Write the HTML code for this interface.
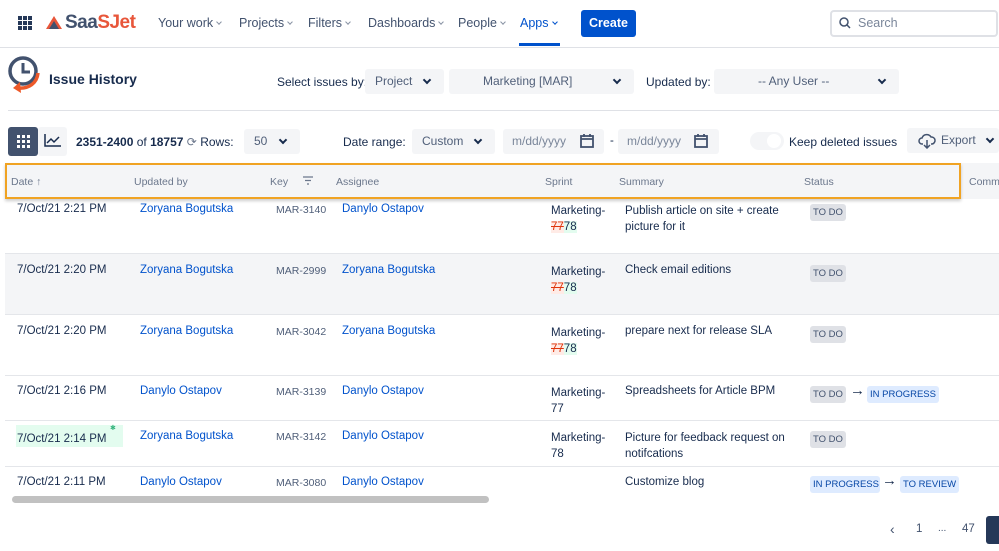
<!DOCTYPE html>
<html><head><meta charset="utf-8"><style>
*{box-sizing:border-box;margin:0;padding:0}
body{width:999px;height:551px;overflow:hidden;background:#fff;font-family:"Liberation Sans",sans-serif;font-size:11.5px;color:#172b4d;position:relative}
.a{position:absolute;white-space:nowrap}
.nav{font-size:12.5px;color:#42526e;top:16px}
.cv{display:inline-block;width:5px;height:5px;border-right:1.3px solid currentColor;border-bottom:1.3px solid currentColor;transform:rotate(45deg);vertical-align:3px;margin-left:4px}
.nav .cv{width:4px;height:4px;border-color:#8993a4}
.sel{background:#f4f5f7;border-radius:3px;height:25px;color:#505f79;font-size:12px;line-height:25px}
.sel .cv{position:absolute;right:14px;top:8px;border-color:#172b4d;width:6px;height:6px;border-width:0 2px 2px 0}
.lnk{color:#0052cc}
.key{color:#505f79;font-size:10.5px}
.th{color:#6b778c;font-size:10.5px;top:176px}
.lz{background:#dfe1e6;color:#42526e;font-size:9.5px;padding:3px 3px;border-radius:3px}
.lb{background:#deebff;color:#0747a6;font-size:9.5px;padding:3px 3px;border-radius:3px}
.del{background:#ffebe6;text-decoration:line-through;color:#de350b}
.ins{background:#e3fcef}
</style></head><body>
<div class="a" style="left:18px;top:16px;width:14px;height:14px;display:grid;grid-template-columns:repeat(3,4px);gap:1px">
<i style="background:#253858"></i><i style="background:#253858"></i><i style="background:#253858"></i><i style="background:#253858"></i><i style="background:#253858"></i><i style="background:#253858"></i><i style="background:#253858"></i><i style="background:#253858"></i><i style="background:#253858"></i></div>
<svg class="a" style="left:45px;top:15px" width="18" height="15"><path d="M9 1L1 14h16z" fill="#e8563a"/><path d="M9 6L4 14h10z" fill="#42526e"/></svg>
<div class="a" style="left:65px;top:12px;font-size:19px;font-weight:bold;letter-spacing:-0.5px;color:#42526e">Saa<span style="color:#e8563a">SJet</span></div>
<div class="a nav" style="left:158px">Your work<span class="cv"></span></div>
<div class="a nav" style="left:239px">Projects<span class="cv"></span></div>
<div class="a nav" style="left:308px">Filters<span class="cv"></span></div>
<div class="a nav" style="left:368px">Dashboards<span class="cv"></span></div>
<div class="a nav" style="left:458px">People<span class="cv"></span></div>
<div class="a nav" style="left:520px;color:#0052cc">Apps<span class="cv" style="border-color:#0052cc"></span></div>
<div class="a" style="left:519px;top:43px;width:41px;height:3px;background:#0052cc"></div>
<div class="a" style="left:581px;top:10px;width:55px;height:27px;background:#0052cc;border-radius:3px;color:#fff;font-weight:bold;font-size:12.5px;text-align:center;line-height:27px">Create</div>
<div class="a" style="left:830px;top:10px;width:168px;height:27px;border:2px solid #dfe1e6;border-radius:4px;color:#7a869a;font-size:12.5px;line-height:23px;padding-left:26px">Search</div>
<svg class="a" style="left:839px;top:17px" width="12" height="12"><circle cx="5" cy="5" r="4" fill="none" stroke="#42526e" stroke-width="1.5"/><path d="M8 8l3 3" stroke="#42526e" stroke-width="1.5"/></svg>
<div class="a" style="left:0;top:47px;width:999px;height:1px;background:#dfe1e6"></div>
<svg class="a" style="left:6px;top:54px" width="36" height="44"><circle cx="17" cy="17" r="13" fill="none" stroke="#42526e" stroke-width="3.5"/><path d="M17 9v9h7" fill="none" stroke="#42526e" stroke-width="3"/><path d="M32 19c-1 10-9 16-20 15" fill="none" stroke="#ed5a2a" stroke-width="3.5"/><path d="M14 28l-7 6 8 5z" fill="#ed5a2a"/></svg>
<div class="a" style="left:49px;top:71px;font-size:14px;font-weight:bold;color:#172b4d">Issue History</div>
<div class="a" style="left:277px;top:75px;font-size:12px">Select issues by:</div>
<div class="a sel" style="left:365px;top:69px;width:79px;padding-left:10px">Project<span class="cv"></span></div>
<div class="a sel" style="left:449px;top:69px;width:185px;padding-left:34px">Marketing [MAR]<span class="cv"></span></div>
<div class="a" style="left:646px;top:75px;font-size:12px">Updated by:</div>
<div class="a sel" style="left:714px;top:69px;width:185px;padding-left:44px">-- Any User --<span class="cv"></span></div>
<div class="a" style="left:8px;top:110px;width:991px;height:1px;background:#dfe1e6"></div>
<div class="a" style="left:8px;top:127px;width:30px;height:29px;background:#42526e;border-radius:3px"></div>
<div class="a" style="left:17px;top:135px;width:13px;height:13px;display:grid;grid-template-columns:repeat(3,3px);gap:2px"><i style="background:#fff"></i><i style="background:#fff"></i><i style="background:#fff"></i><i style="background:#fff"></i><i style="background:#fff"></i><i style="background:#fff"></i><i style="background:#fff"></i><i style="background:#fff"></i><i style="background:#fff"></i></div>
<div class="a" style="left:38px;top:127px;width:29px;height:29px;background:#f4f5f7;border-radius:3px"></div>
<svg class="a" style="left:44px;top:133px" width="18" height="14"><path d="M1 1v12h16" fill="none" stroke="#172b4d" stroke-width="1.5"/><path d="M3 10l4-4 3 3 5-5" fill="none" stroke="#172b4d" stroke-width="1.5"/></svg>
<div class="a" style="left:76px;top:135px;font-size:12px"><b>2351-2400</b> of <b>18757</b> <span style="color:#6b778c">⟳</span> Rows:</div>
<div class="a sel" style="left:244px;top:129px;width:56px;padding-left:10px">50<span class="cv"></span></div>
<div class="a" style="left:343px;top:135px;font-size:12px">Date range:</div>
<div class="a sel" style="left:412px;top:129px;width:83px;padding-left:10px">Custom<span class="cv"></span></div>
<div class="a sel" style="left:503px;top:129px;width:101px;padding-left:9px;color:#7a869a">m/dd/yyyy</div>
<div class="a" style="left:610px;top:135px">-</div>
<div class="a sel" style="left:618px;top:129px;width:101px;padding-left:9px;color:#7a869a">m/dd/yyyy</div>
<svg class="a" style="left:580px;top:134px" width="14" height="14"><rect x="1" y="2" width="12" height="11" fill="none" stroke="#42526e" stroke-width="1.8"/><path d="M1 5h12M4 0v3M10 0v3" stroke="#42526e" stroke-width="1.8"/></svg>
<svg class="a" style="left:694px;top:134px" width="14" height="14"><rect x="1" y="2" width="12" height="11" fill="none" stroke="#42526e" stroke-width="1.8"/><path d="M1 5h12M4 0v3M10 0v3" stroke="#42526e" stroke-width="1.8"/></svg>
<div class="a" style="left:750px;top:132px;width:34px;height:18px;border-radius:9px;background:#f4f5f7"></div>
<div class="a" style="left:767px;top:134px;width:14px;height:14px;border-radius:7px;background:#fff"></div>
<div class="a" style="left:789px;top:135px;font-size:12px">Keep deleted issues</div>
<div class="a sel" style="left:907px;top:128px;width:92px;padding-left:34px">Export<span class="cv" style="right:6px"></span></div>
<svg class="a" style="left:918px;top:133px" width="18" height="16"><path d="M5 11H4a3 3 0 010-6 5 5 0 019-1 3.5 3.5 0 011 7h-1" fill="none" stroke="#42526e" stroke-width="1.5"/><path d="M9 7v8M6 12l3 3 3-3" fill="none" stroke="#42526e" stroke-width="1.5"/></svg>
<div class="a" style="left:5px;top:163px;width:994px;height:36px;background:#f4f5f7"></div>
<div class="a" style="left:5px;top:163px;width:956px;height:36px;border:2px solid #f0a323;box-shadow:0 2px 3px rgba(0,0,0,.2)"></div>
<div class="a th" style="left:11px">Date ↑</div>
<div class="a th" style="left:134px">Updated by</div>
<div class="a th" style="left:270px">Key</div>
<svg class="a" style="left:303px;top:176px" width="10" height="9"><path d="M0 1h10M2 4.5h6M4 8h2" stroke="#6b778c" stroke-width="1.3"/></svg>
<div class="a th" style="left:336px">Assignee</div>
<div class="a th" style="left:545px">Sprint</div>
<div class="a th" style="left:619px">Summary</div>
<div class="a th" style="left:804px">Status</div>
<div class="a th" style="left:969px">Comm</div>
<div class="a" style="left:5px;top:254px;width:994px;height:60px;background:#f4f5f7"></div>
<div class="a" style="left:5px;top:253px;width:994px;height:1px;background:#e4e6ea"></div>
<div class="a" style="left:5px;top:314px;width:994px;height:1px;background:#e4e6ea"></div>
<div class="a" style="left:5px;top:375px;width:994px;height:1px;background:#e4e6ea"></div>
<div class="a" style="left:5px;top:420px;width:994px;height:1px;background:#e4e6ea"></div>
<div class="a" style="left:5px;top:466px;width:994px;height:1px;background:#e4e6ea"></div>

<div class="a" style="left:17px;top:203px">7/Oct/21 2:21 PM</div><div class="a lnk" style="left:140px;top:203px">Zoryana Bogutska</div><div class="a key" style="left:276px;top:204px">MAR-3140</div><div class="a lnk" style="left:342px;top:203px">Danylo Ostapov</div>
<div class="a" style="left:551px;top:203px;line-height:16px">Marketing-<br><span class="del">77</span><span class="ins">78</span></div>
<div class="a" style="left:625px;top:203px;line-height:16px">Publish article on site + create<br>picture for it</div>
<div class="a lz" style="left:810px;top:204px">TO DO</div>

<div class="a" style="left:17px;top:264px">7/Oct/21 2:20 PM</div><div class="a lnk" style="left:140px;top:264px">Zoryana Bogutska</div><div class="a key" style="left:276px;top:265px">MAR-2999</div><div class="a lnk" style="left:342px;top:264px">Zoryana Bogutska</div>
<div class="a" style="left:551px;top:264px;line-height:16px">Marketing-<br><span class="del">77</span><span class="ins">78</span></div>
<div class="a" style="left:625px;top:264px">Check email editions</div>
<div class="a lz" style="left:810px;top:265px">TO DO</div>

<div class="a" style="left:17px;top:325px">7/Oct/21 2:20 PM</div><div class="a lnk" style="left:140px;top:325px">Zoryana Bogutska</div><div class="a key" style="left:276px;top:326px">MAR-3042</div><div class="a lnk" style="left:342px;top:325px">Zoryana Bogutska</div>
<div class="a" style="left:551px;top:325px;line-height:16px">Marketing-<br><span class="del">77</span><span class="ins">78</span></div>
<div class="a" style="left:625px;top:325px">prepare next for release SLA</div>
<div class="a lz" style="left:810px;top:326px">TO DO</div>

<div class="a" style="left:17px;top:385px">7/Oct/21 2:16 PM</div><div class="a lnk" style="left:140px;top:385px">Danylo Ostapov</div><div class="a key" style="left:276px;top:386px">MAR-3139</div><div class="a lnk" style="left:342px;top:385px">Danylo Ostapov</div>
<div class="a" style="left:551px;top:385px;line-height:16px">Marketing-<br>77</div>
<div class="a" style="left:625px;top:385px">Spreadsheets for Article BPM</div>
<div class="a lz" style="left:810px;top:386px">TO DO</div><div class="a" style="left:850px;top:382px;font-size:15px;font-weight:bold">→</div><div class="a lb" style="left:867px;top:386px">IN PROGRESS</div>

<div class="a" style="left:16px;top:425px;width:107px;height:22px;background:#e3fcef"></div>
<div class="a" style="left:17px;top:433px">7/Oct/21 2:14 PM</div><div class="a" style="left:110px;top:424px;font-size:7px;color:#36b37e">✱</div>
<div class="a lnk" style="left:140px;top:430px">Zoryana Bogutska</div><div class="a key" style="left:276px;top:431px">MAR-3142</div><div class="a lnk" style="left:342px;top:430px">Danylo Ostapov</div>
<div class="a" style="left:551px;top:430px;line-height:16px">Marketing-<br>78</div>
<div class="a" style="left:625px;top:430px;line-height:16px">Picture for feedback request on<br>notifcations</div>
<div class="a lz" style="left:810px;top:431px">TO DO</div>

<div class="a" style="left:17px;top:476px">7/Oct/21 2:11 PM</div><div class="a lnk" style="left:140px;top:476px">Danylo Ostapov</div><div class="a key" style="left:276px;top:477px">MAR-3080</div><div class="a lnk" style="left:342px;top:476px">Danylo Ostapov</div>
<div class="a" style="left:625px;top:476px">Customize blog</div>
<div class="a lb" style="left:810px;top:476px;width:70px;overflow:hidden">IN PROGRESS</div><div class="a" style="left:882px;top:472px;font-size:15px;font-weight:bold">→</div><div class="a lb" style="left:900px;top:476px">TO REVIEW</div>

<div class="a" style="left:12px;top:496px;width:477px;height:7px;border-radius:4px;background:#c1c1c1"></div>
<div class="a" style="left:890px;top:521px;font-size:14px;color:#42526e">‹</div>
<div class="a" style="left:916px;top:523px;color:#42526e">1</div>
<div class="a" style="left:938px;top:523px;color:#42526e;font-size:10px">...</div>
<div class="a" style="left:962px;top:523px;color:#42526e">47</div>
<div class="a" style="left:986px;top:516px;width:14px;height:28px;background:#253858;border-radius:3px 0 0 3px"></div>
</body></html>
